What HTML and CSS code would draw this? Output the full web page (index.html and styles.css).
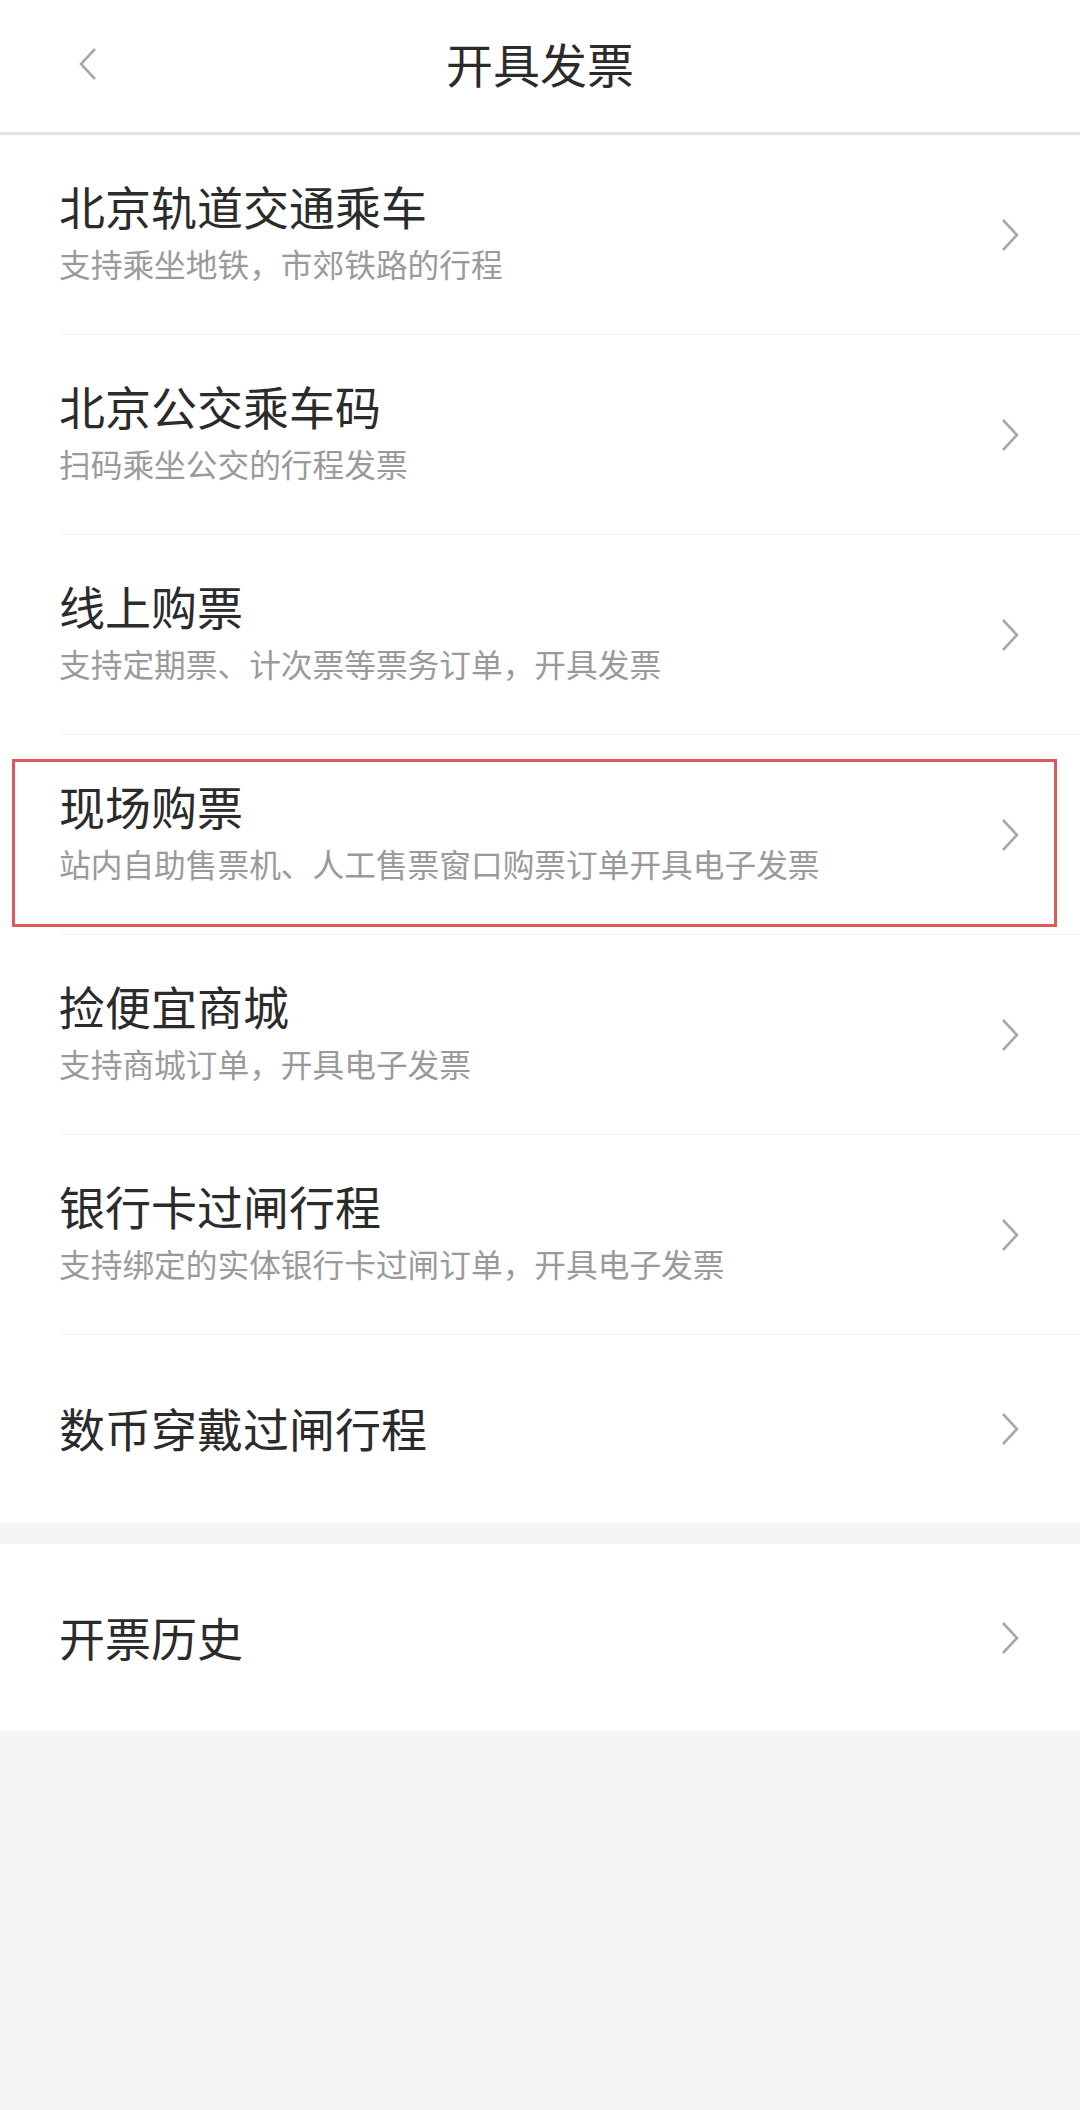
FILE: index.html
```html
<!DOCTYPE html>
<html lang="zh-CN">
<head>
<meta charset="utf-8">
<title>开具发票</title>
<link rel="stylesheet" href="styles.css">
</head>
<body>
<header class="topbar">
  <span class="back">
    <svg width="20" height="34" viewBox="0 0 20 34"><polyline points="17,2 3,17 17,32" fill="none" stroke="#a8a8a8" stroke-width="2.6" stroke-linejoin="miter"/></svg>
  </span>
  <h1 class="title">开具发票</h1>
</header>

<ul class="list">
  <li class="item">
    <div class="body">
      <div class="text"><div class="name">北京轨道交通乘车</div><div class="desc">支持乘坐地铁，市郊铁路的行程</div></div>
      <svg class="arrow" width="20" height="34" viewBox="0 0 20 34"><polyline points="3,2 17,17 3,32" fill="none" stroke="#a8a8a8" stroke-width="2.6"/></svg>
    </div>
  </li>
  <li class="item">
    <div class="body">
      <div class="text"><div class="name">北京公交乘车码</div><div class="desc">扫码乘坐公交的行程发票</div></div>
      <svg class="arrow" width="20" height="34" viewBox="0 0 20 34"><polyline points="3,2 17,17 3,32" fill="none" stroke="#a8a8a8" stroke-width="2.6"/></svg>
    </div>
  </li>
  <li class="item">
    <div class="body">
      <div class="text"><div class="name">线上购票</div><div class="desc">支持定期票、计次票等票务订单，开具发票</div></div>
      <svg class="arrow" width="20" height="34" viewBox="0 0 20 34"><polyline points="3,2 17,17 3,32" fill="none" stroke="#a8a8a8" stroke-width="2.6"/></svg>
    </div>
  </li>
  <li class="item">
    <div class="body">
      <div class="text"><div class="name">现场购票</div><div class="desc">站内自助售票机、人工售票窗口购票订单开具电子发票</div></div>
      <svg class="arrow" width="20" height="34" viewBox="0 0 20 34"><polyline points="3,2 17,17 3,32" fill="none" stroke="#a8a8a8" stroke-width="2.6"/></svg>
    </div>
    <span class="highlight"></span>
  </li>
  <li class="item">
    <div class="body">
      <div class="text"><div class="name">捡便宜商城</div><div class="desc">支持商城订单，开具电子发票</div></div>
      <svg class="arrow" width="20" height="34" viewBox="0 0 20 34"><polyline points="3,2 17,17 3,32" fill="none" stroke="#a8a8a8" stroke-width="2.6"/></svg>
    </div>
  </li>
  <li class="item">
    <div class="body">
      <div class="text"><div class="name">银行卡过闸行程</div><div class="desc">支持绑定的实体银行卡过闸订单，开具电子发票</div></div>
      <svg class="arrow" width="20" height="34" viewBox="0 0 20 34"><polyline points="3,2 17,17 3,32" fill="none" stroke="#a8a8a8" stroke-width="2.6"/></svg>
    </div>
  </li>
  <li class="item item-single item-last">
    <div class="body">
      <div class="text"><div class="name">数币穿戴过闸行程</div></div>
      <svg class="arrow" width="20" height="34" viewBox="0 0 20 34"><polyline points="3,2 17,17 3,32" fill="none" stroke="#a8a8a8" stroke-width="2.6"/></svg>
    </div>
  </li>
</ul>

<ul class="list list-second">
  <li class="item item-single item-last item-history">
    <div class="body">
      <div class="text"><div class="name">开票历史</div></div>
      <svg class="arrow" width="20" height="34" viewBox="0 0 20 34"><polyline points="3,2 17,17 3,32" fill="none" stroke="#a8a8a8" stroke-width="2.6"/></svg>
    </div>
  </li>
</ul>
</body>
</html>
```

FILE: styles.css
```css
* { box-sizing: border-box; }
html, body {
  margin: 0;
  padding: 0;
}
body {
  width: 1080px;
  min-height: 2110px;
  background: #f5f5f5;
  font-family: "Noto Sans CJK SC", "Noto Sans", sans-serif;
  color: #333;
}
.topbar {
  height: 135px;
  background: #fff;
  border-bottom: 3px solid #e2e2e2;
  display: flex;
  align-items: center;
  justify-content: center;
  position: relative;
}
.back {
  position: absolute;
  left: 78px;
  top: 47px;
  display: block;
  line-height: 0;
}
.title {
  margin: -8px 0 0;
  font-size: 47px;
  font-weight: 400;
  color: #2b2b2b;
  line-height: 1;
}
.list {
  list-style: none;
  margin: 0;
  padding: 0;
  background: #fff;
}
.list-second {
  margin-top: 21px;
}
.item {
  position: relative;
  padding-left: 62px;
}
.body {
  height: 200px;
  border-bottom: 1px solid #efefef;
  display: flex;
  align-items: center;
  justify-content: space-between;
  padding-right: 62px;
}
.item-last .body {
  border-bottom: none;
  height: 188px;
}
.item-history .body {
  height: 187px;
}
.text {
  display: flex;
  flex-direction: column;
  gap: 10px;
  margin-top: -10px;
  margin-left: -3px;
}
.item-single .text {
  margin-top: -4px;
}
.name {
  font-size: 46px;
  line-height: 56px;
  color: #2b2b2b;
}
.desc {
  font-size: 31.7px;
  line-height: 40px;
  color: #9a9a9a;
}
.arrow {
  display: block;
  flex: none;
  margin-right: -2px;
}
.highlight {
  position: absolute;
  left: 12px;
  top: 24px;
  width: 1045px;
  height: 168px;
  border: 3px solid #dc5a5c;
  pointer-events: none;
}
```
